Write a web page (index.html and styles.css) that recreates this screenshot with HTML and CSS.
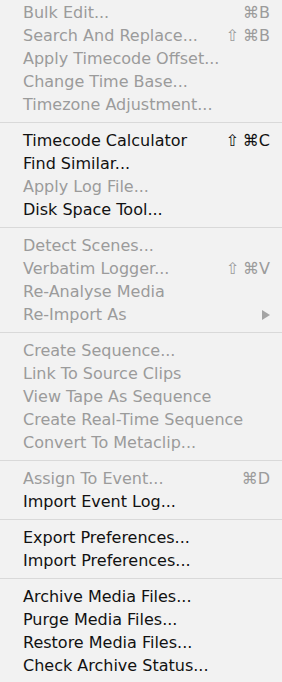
FILE: index.html
```html
<!DOCTYPE html>
<html>
<head>
<meta charset="utf-8">
<link rel="stylesheet" href="styles.css">
</head>
<body>
<div class="menu">
  <div class="item off"><span class="label">Bulk Edit...</span><span class="key">⌘B</span></div>
  <div class="item off"><span class="label">Search And Replace...</span><span class="key"><span class="shift">⇧</span>⌘B</span></div>
  <div class="item off"><span class="label">Apply Timecode Offset...</span></div>
  <div class="item off"><span class="label">Change Time Base...</span></div>
  <div class="item off"><span class="label">Timezone Adjustment...</span></div>
  <div class="sep"></div>
  <div class="item"><span class="label">Timecode Calculator</span><span class="key"><span class="shift">⇧</span>⌘C</span></div>
  <div class="item"><span class="label">Find Similar...</span></div>
  <div class="item off"><span class="label">Apply Log File...</span></div>
  <div class="item"><span class="label">Disk Space Tool...</span></div>
  <div class="sep"></div>
  <div class="item off"><span class="label">Detect Scenes...</span></div>
  <div class="item off"><span class="label">Verbatim Logger...</span><span class="key"><span class="shift">⇧</span>⌘V</span></div>
  <div class="item off"><span class="label">Re-Analyse Media</span></div>
  <div class="item off"><span class="label">Re-Import As</span><span class="arrow"></span></div>
  <div class="sep"></div>
  <div class="item off"><span class="label">Create Sequence...</span></div>
  <div class="item off"><span class="label">Link To Source Clips</span></div>
  <div class="item off"><span class="label">View Tape As Sequence</span></div>
  <div class="item off"><span class="label">Create Real-Time Sequence</span></div>
  <div class="item off"><span class="label">Convert To Metaclip...</span></div>
  <div class="sep"></div>
  <div class="item off"><span class="label">Assign To Event...</span><span class="key">⌘D</span></div>
  <div class="item"><span class="label">Import Event Log...</span></div>
  <div class="sep"></div>
  <div class="item"><span class="label">Export Preferences...</span></div>
  <div class="item"><span class="label">Import Preferences...</span></div>
  <div class="sep"></div>
  <div class="item"><span class="label">Archive Media Files...</span></div>
  <div class="item"><span class="label">Purge Media Files...</span></div>
  <div class="item"><span class="label">Restore Media Files...</span></div>
  <div class="item"><span class="label">Check Archive Status...</span></div>
</div>
</body>
</html>
```
FILE: styles.css
```css
html, body {
  margin: 0;
  padding: 0;
  background: #f2f2f2;
}
.menu {
  width: 282px;
  height: 682px;
  box-sizing: border-box;
  padding-top: 1px;
  background: #f2f2f2;
  font-family: "DejaVu Sans", "Lucida Grande", sans-serif;
  font-size: 16px;
  color: #111;
  overflow: hidden;
}
.item {
  height: 23px;
  line-height: 23px;
  display: flex;
  align-items: center;
  justify-content: space-between;
  padding: 0 12px 0 23px;
  white-space: nowrap;
}
.item.off {
  color: #9b9b9b;
}
.key {
  font-size: 16px;
}
.shift {
  margin-right: 4px;
}
.arrow {
  width: 0;
  height: 0;
  border-top: 5px solid transparent;
  border-bottom: 5px solid transparent;
  border-left: 8px solid #a4a4a4;
  margin-right: 0;
}
.sep {
  height: 1px;
  background: #d9d9d9;
  margin: 6px 0;
}
```
